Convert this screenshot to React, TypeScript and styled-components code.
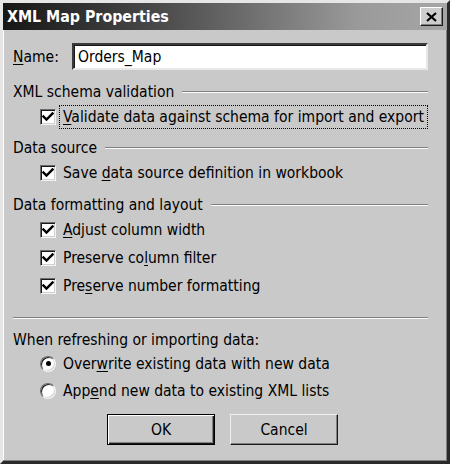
import React from 'react'
import styled, { createGlobalStyle } from 'styled-components'

const Global = createGlobalStyle`
  html, body { margin: 0; padding: 0; background: #c9c9c9; }
  body { font-family: "DejaVu Sans Condensed", "DejaVu Sans", sans-serif; font-size: 15.5px; color: #000; }
`

const Window = styled.div`
  width: 450px;
  height: 464px;
  box-sizing: border-box;
  background: #c9c9c9;
  border-style: solid;
  border-width: 3px;
  border-color: #e6e6e6 #2a2a2a #2a2a2a #e6e6e6;
  box-shadow: inset -1px -1px 0 #808080, inset 1px 1px 0 #fff;
  display: flex;
  flex-direction: column;
`

const TitleBar = styled.div`
  height: 27px;
  display: flex;
  align-items: center;
  justify-content: space-between;
  padding: 0 4px 0 4px;
  background: linear-gradient(to right, #161616 0%, #4a4a4a 35%, #9a9a9a 80%, #a6a6a6 100%);
`

const Title = styled.span`
  color: #fff;
  font-weight: bold;
  font-size: 15.8px;
`

const CloseBtn = styled.div`
  width: 23px;
  height: 19px;
  box-sizing: border-box;
  background: #cdcdcd;
  border-style: solid;
  border-width: 1px;
  border-color: #fff #1a1a1a #1a1a1a #fff;
  box-shadow: inset -1px -1px 0 #808080;
  display: flex;
  align-items: center;
  justify-content: center;
`

const Body = styled.div`
  flex: 1;
  display: flex;
  flex-direction: column;
  padding: 0 19px 0 10px;
`

const NameRow = styled.div`
  margin-top: 13px;
  height: 27px;
  display: flex;
  align-items: center;
`

const NameLabel = styled.span`
  width: 59px;
`

const TextBox = styled.div`
  flex: 1;
  height: 27px;
  box-sizing: border-box;
  background: #fff;
  border-style: solid;
  border-width: 2px;
  border-color: #3a3a3a #e8e8e8 #e8e8e8 #3a3a3a;
  box-shadow: inset 1px 1px 0 #1a1a1a;
  display: flex;
  align-items: center;
  padding-left: 4px;
`

const Header = styled.div<{ $top: number }>`
  margin-top: ${p => p.$top}px;
  height: 20px;
  display: flex;
  align-items: center;
  gap: 8px;
  &::after {
    content: '';
    flex: 1;
    height: 0;
    border-top: 1px solid #808080;
    border-bottom: 1px solid #fafafa;
  }
`

const Separator = styled.div`
  margin-top: 17px;
  border-top: 1px solid #808080;
  border-bottom: 1px solid #fafafa;
`

const Plain = styled.div`
  margin-top: 11px;
  height: 20px;
  display: flex;
  align-items: center;
`

const OptionRow = styled.div<{ $top?: number; $h?: number }>`
  margin-top: ${p => p.$top ?? 0}px;
  height: ${p => p.$h ?? 28}px;
  display: flex;
  align-items: center;
  padding-left: 27px;
  gap: 7px;
`

const Box = styled.div`
  width: 16px;
  height: 16px;
  box-sizing: border-box;
  background: #fff;
  border-style: solid;
  border-width: 1px;
  border-color: #6a6a6a #f4f4f4 #f4f4f4 #6a6a6a;
  box-shadow: inset 1px 1px 0 #1a1a1a, inset -1px -1px 0 #cfcfcf;
  display: flex;
  align-items: center;
  justify-content: center;
`

const Radio = styled.div<{ $on?: boolean }>`
  width: 16px;
  height: 16px;
  box-sizing: border-box;
  border-radius: 50%;
  background: #fff;
  border-style: solid;
  border-width: 1px;
  border-color: #6a6a6a #f4f4f4 #f4f4f4 #6a6a6a;
  box-shadow: inset 1px 1px 0 #1a1a1a, inset -1px -1px 0 #cfcfcf;
  display: flex;
  align-items: center;
  justify-content: center;
  &::after {
    content: '';
    display: ${p => (p.$on ? 'block' : 'none')};
    width: 5px;
    height: 5px;
    border-radius: 50%;
    background: #000;
  }
`

const Label = styled.span<{ $focus?: boolean }>`
  padding: 2px 3px;
  margin-left: -3px;
  outline: ${p => (p.$focus ? '1px dotted #000' : 'none')};
  white-space: nowrap;
`

const Key = styled.span`
  text-decoration: underline;
  text-underline-offset: 2px;
`

const Buttons = styled.div`
  margin-top: 10px;
  display: flex;
  gap: 15px;
  padding-left: 94px;
`

const Button = styled.div<{ $default?: boolean }>`
  width: 108px;
  height: 31px;
  box-sizing: border-box;
  background: #c9c9c9;
  border: 1px solid;
  border-color: ${p => (p.$default ? '#000' : '#f0f0f0 #1a1a1a #1a1a1a #f0f0f0')};
  box-shadow: ${p =>
    p.$default
      ? 'inset 1px 1px 0 #fff, inset -1px -1px 0 #1a1a1a, inset -2px -2px 0 #808080'
      : 'inset -1px -1px 0 #808080'};
  display: flex;
  align-items: center;
  justify-content: center;
`

const Check = () =>
  <svg width="12" height="12" viewBox="0 0 12 12">
    <path d="M1.5 5.5 L4.5 8.5 L10.5 2.5" stroke="#000" strokeWidth="2.4" fill="none" strokeLinecap="square" />
  </svg>

const CheckOption = ({ children, top, focus }: { children: React.ReactNode; top?: number; focus?: boolean }) =>
  <OptionRow $top={top}>
    <Box><Check /></Box>
    <Label $focus={focus}>{children}</Label>
  </OptionRow>

export default function App() {
  return <>
    <Global />
    <Window>
      <TitleBar>
        <Title>XML Map Properties</Title>
        <CloseBtn>
          <svg width="11" height="10" viewBox="0 0 11 10">
            <path d="M1 1 L10 9 M10 1 L1 9" stroke="#000" strokeWidth="2.2" />
          </svg>
        </CloseBtn>
      </TitleBar>
      <Body>
        <NameRow>
          <NameLabel><Key>N</Key>ame:</NameLabel>
          <TextBox>Orders_Map</TextBox>
        </NameRow>

        <Header $top={12}>XML schema validation</Header>
        <CheckOption top={1} focus><Key>V</Key>alidate data against schema for import and export</CheckOption>

        <Header $top={7}>Data source</Header>
        <CheckOption top={1}>Save <Key>d</Key>ata source definition in workbook</CheckOption>

        <Header $top={8}>Data formatting and layout</Header>
        <CheckOption top={1}><Key>A</Key>djust column width</CheckOption>
        <CheckOption>Preserve co<Key>l</Key>umn filter</CheckOption>
        <CheckOption>Pre<Key>s</Key>erve number formatting</CheckOption>

        <Separator />
        <Plain>When refreshing or importing data:</Plain>
        <OptionRow $h={27}>
          <Radio $on />
          <Label>Over<Key>w</Key>rite existing data with new data</Label>
        </OptionRow>
        <OptionRow $h={27}>
          <Radio />
          <Label>App<Key>e</Key>nd new data to existing XML lists</Label>
        </OptionRow>

        <Buttons>
          <Button $default>OK</Button>
          <Button>Cancel</Button>
        </Buttons>
      </Body>
    </Window>
  </>
}
